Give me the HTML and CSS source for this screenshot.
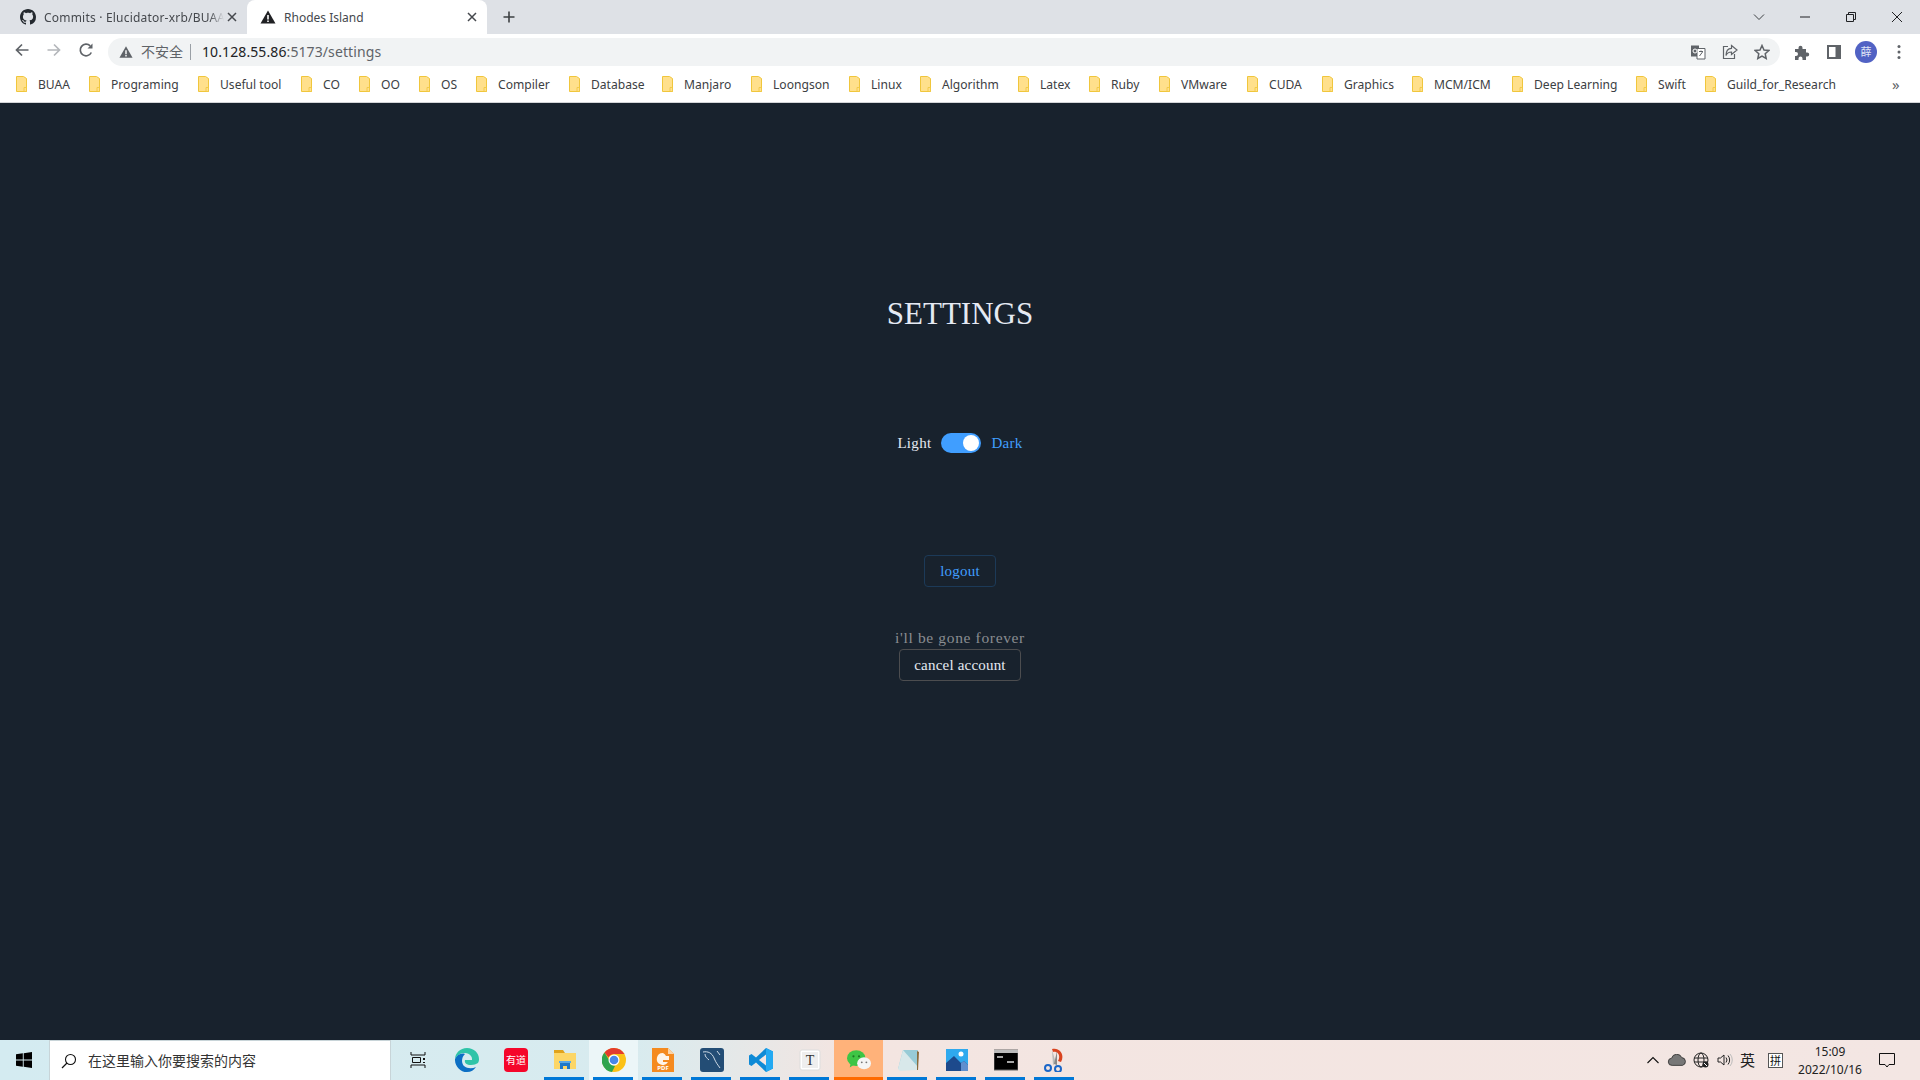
FILE: index.html
```html
<!DOCTYPE html>
<html lang="en">

<head>
    <meta charset="UTF-8">
    <meta name="viewport" content="width=device-width, initial-scale=1.0">
    <title>Rhodes Island</title>
    <link rel="stylesheet" href="styles.css">
</head>

<body>
    <svg class="sprites" width="0" height="0">
        <symbol id="folder" viewBox="0 0 11 16">
            <path d="M.5.5h7l3 2v13H.5z" fill="#ffe08c" stroke="#f0c63c"/>
            <path d="M8 11.5h2.5v4H8z" fill="#ffe08c" stroke="#f0c63c" stroke-width=".8"/>
        </symbol>
        <symbol id="warn" viewBox="0 0 16 16">
            <path d="M8 1.5 15.5 14.5H.5z" fill="currentColor"/>
            <path d="M7.2 6h1.6v4.6H7.2zM7.2 11.4h1.6V13H7.2z" fill="#fff"/>
        </symbol>
        <symbol id="close-x" viewBox="0 0 10 10">
            <path d="M1 1l8 8M9 1 1 9" stroke="#45484d" stroke-width="1.500"/>
        </symbol>
    </svg>

    <div class="browser">
        <div class="tabstrip">
            <div class="tab">
                <svg class="favicon" viewBox="0 0 16 16"><path fill="#24292f" d="M8 0C3.58 0 0 3.58 0 8c0 3.54 2.29 6.53 5.47 7.59.4.07.55-.17.55-.38 0-.19-.01-.82-.01-1.49-2.01.37-2.53-.49-2.69-.94-.09-.23-.48-.94-.82-1.13-.28-.15-.68-.52-.01-.53.63-.01 1.08.58 1.23.82.72 1.21 1.87.87 2.33.66.07-.52.28-.87.51-1.07-1.78-.2-3.64-.89-3.64-3.95 0-.87.31-1.59.82-2.15-.08-.2-.36-1.02.08-2.12 0 0 .67-.21 2.2.82.64-.18 1.32-.27 2-.27s1.36.09 2 .27c1.53-1.04 2.2-.82 2.2-.82.44 1.1.16 1.92.08 2.12.51.56.82 1.27.82 2.15 0 3.07-1.87 3.75-3.65 3.95.29.25.54.73.54 1.48 0 1.07-.01 1.93-.01 2.2 0 .21.15.46.55.38A8.01 8.01 0 0 0 16 8c0-4.42-3.58-8-8-8z"/></svg>
                <span class="tab-title tab-title-fade">Commits · Elucidator-xrb/BUAA</span>
                <svg class="tab-close"><use href="#close-x"/></svg>
            </div>
            <div class="tab tab-active">
                <svg class="favicon favicon-warn"><use href="#warn"/></svg>
                <span class="tab-title">Rhodes Island</span>
                <svg class="tab-close"><use href="#close-x"/></svg>
            </div>
            <svg class="new-tab" viewBox="0 0 12 12"><path d="M6 .5v11M.5 6h11" stroke="#3c4043" stroke-width="1.6"/></svg>
            <div class="window-buttons">
                <svg viewBox="0 0 12 12" class="win-chevron"><path d="M1 3.5 6 8.5 11 3.5" fill="none" stroke="#3c4043"/></svg>
                <svg viewBox="0 0 12 12" class="win-min"><path d="M1 6h10" stroke="#202124"/></svg>
                <svg viewBox="0 0 12 12" class="win-restore"><path d="M1.5 3.5h7v7h-7zM3.5 3.5v-2h7v7h-2" fill="none" stroke="#202124"/></svg>
                <svg viewBox="0 0 12 12" class="win-close"><path d="M1 1l10 10M11 1 1 11" stroke="#202124"/></svg>
            </div>
        </div>

        <div class="toolbar">
            <div class="nav-buttons">
                <svg viewBox="0 0 16 16"><path d="M14.5 8H2.5M8 2.5 2.5 8 8 13.5" fill="none" stroke="#5f6368" stroke-width="1.7"/></svg>
                <svg viewBox="0 0 16 16"><path d="M1.5 8h12M8 2.5 13.500 8 8 13.5" fill="none" stroke="#b4b7bb" stroke-width="1.7"/></svg>
                <svg viewBox="0 0 16 16"><path d="M13.300 10.500A5.800 5.800 0 1 1 12.200 3.900" fill="none" stroke="#5f6368" stroke-width="1.7"/><path d="M14.500 1.500v5h-5z" fill="#5f6368"/></svg>
            </div>
            <div class="omnibox">
                <svg class="omni-warn"><use href="#warn"/></svg>
                <span class="not-secure">不安全</span>
                <span class="omni-sep"></span>
                <span class="url"><span class="url-host">10.128.55.86</span>:5173/settings</span>
                <div class="omni-actions">
                    <svg viewBox="0 0 16 16"><path d="M1 1.500h8v11H1z" fill="#5f6368"/><path d="M7 4.500h8v10.500H7z" fill="#fff" stroke="#5f6368"/><path d="M9 7.500h4M11 6.500v1M9.500 12l3-4" stroke="#5f6368" fill="none"/><circle cx="5" cy="7" r="2" fill="none" stroke="#fff"/></svg>
                    <svg viewBox="0 0 16 16"><path d="M6 2.500H1.500v12h11V10" fill="none" stroke="#5f6368" stroke-width="1.200"/><path d="M9.500 1.500 15 6l-5.500 4.500V8C7 8 5 9 4 11.500 4 7.500 6 4.500 9.500 4.300z" fill="none" stroke="#5f6368" stroke-width="1.200"/></svg>
                    <svg viewBox="0 0 16 16"><path d="M8 1.500l2 4.500 4.800.5-3.600 3.200 1 4.800L8 12.100 3.800 14.500l1-4.800L1.200 6.500 6 6z" fill="none" stroke="#5f6368" stroke-width="1.500"/></svg>
                </div>
            </div>
            <div class="tool-buttons">
                <svg class="tool-ext" viewBox="0 0 16 16"><path d="M1 5h3.500V3.800a2 2 0 0 1 4 0V5H12v3.500h1.200a2 2 0 0 1 0 4H12V16H8.500v-1.500a2 2 0 0 0-4 0V16H1v-4h1a2 2 0 0 0 0-4H1z" fill="#5f6368"/></svg>
                <svg class="tool-side" viewBox="0 0 14 14"><path d="M1 1h12v12H1z" fill="none" stroke="#5f6368" stroke-width="2"/><path d="M8.500 1H13v12H8.500z" fill="#5f6368"/></svg>
                <span class="avatar">薛</span>
                <svg class="tool-dots" viewBox="0 0 4 16"><circle cx="2" cy="2.500" r="1.500" fill="#5f6368"/><circle cx="2" cy="8" r="1.500" fill="#5f6368"/><circle cx="2" cy="13.500" r="1.500" fill="#5f6368"/></svg>
            </div>
        </div>

        <div class="bookmarks">
            <div class="bookmark"><svg><use href="#folder"/></svg>BUAA</div>
            <div class="bookmark"><svg><use href="#folder"/></svg>Programing</div>
            <div class="bookmark"><svg><use href="#folder"/></svg>Useful tool</div>
            <div class="bookmark"><svg><use href="#folder"/></svg>CO</div>
            <div class="bookmark"><svg><use href="#folder"/></svg>OO</div>
            <div class="bookmark"><svg><use href="#folder"/></svg>OS</div>
            <div class="bookmark"><svg><use href="#folder"/></svg>Compiler</div>
            <div class="bookmark"><svg><use href="#folder"/></svg>Database</div>
            <div class="bookmark"><svg><use href="#folder"/></svg>Manjaro</div>
            <div class="bookmark"><svg><use href="#folder"/></svg>Loongson</div>
            <div class="bookmark"><svg><use href="#folder"/></svg>Linux</div>
            <div class="bookmark"><svg><use href="#folder"/></svg>Algorithm</div>
            <div class="bookmark"><svg><use href="#folder"/></svg>Latex</div>
            <div class="bookmark"><svg><use href="#folder"/></svg>Ruby</div>
            <div class="bookmark"><svg><use href="#folder"/></svg>VMware</div>
            <div class="bookmark"><svg><use href="#folder"/></svg>CUDA</div>
            <div class="bookmark"><svg><use href="#folder"/></svg>Graphics</div>
            <div class="bookmark"><svg><use href="#folder"/></svg>MCM/ICM</div>
            <div class="bookmark"><svg><use href="#folder"/></svg>Deep Learning</div>
            <div class="bookmark"><svg><use href="#folder"/></svg>Swift</div>
            <div class="bookmark"><svg><use href="#folder"/></svg>Guild_for_Research</div>
            <div class="bookmark-more">»</div>
        </div>
    </div>

    <main class="settings">
        <h1>SETTINGS</h1>
        <div class="theme-row">
            <span class="theme-label">Light</span>
            <span class="switch"><span class="switch-knob"></span></span>
            <span class="theme-label theme-on">Dark</span>
        </div>
        <button class="btn btn-logout">logout</button>
        <p class="gone-text">i'll be gone forever</p>
        <button class="btn btn-cancel">cancel account</button>
    </main>

    <footer class="taskbar">
        <svg class="start" viewBox="0 0 16 16"><path d="M0 2.300 6.800 1.300V7.500H0zM7.700 1.200 16 0V7.500H7.700zM0 8.400H6.800V14.700L0 13.700zM7.700 8.400H16V16L7.700 14.800z" fill="#000"/></svg>
        <div class="search">
            <svg viewBox="0 0 16 16"><circle cx="9.500" cy="6.500" r="5" fill="none" stroke="#111" stroke-width="1.100"/><path d="M6 10 1 15" stroke="#111" stroke-width="1.200"/></svg>
            <span class="search-text">在这里输入你要搜索的内容</span>
        </div>
        <div class="task-icons">
            <div class="task"><svg viewBox="0 0 16 16"><path d="M1 0v3h14V0M1 16v-3h14v3M2.500 5.500h8v5h-8z" fill="none" stroke="#111"/><path d="M13 6h2v2h-2zM13 10h2v1h-2z" fill="#111"/></svg></div>
            <div class="task"><svg viewBox="0 0 24 24"><path d="M12 0C5 0 .3 5 0 11c2-4 6-6.500 10-6 5 .5 7.500 3.500 7 7h-7c-1 3 2 5 6 5 3 0 5-1 7-2 1-2 1-3 1-4C24 5 19 0 12 0z" fill="#2fc4a8"/><path d="M0 11c-.3 7 5 13 12 13 4 0 7-2 9-5-4 2-9 1.500-12-1-3-3-2.500-9 1-12C6 4.500 2 7 0 11z" fill="#0c6fc4"/></svg></div>
            <div class="task"><svg viewBox="0 0 24 24"><rect width="24" height="24" rx="4" fill="#f5062a"/><text x="12" y="16" text-anchor="middle" class="youdao">有道</text></svg></div>
            <div class="task task-on"><svg viewBox="0 0 24 24"><path d="M1 2h9l2 3H1z" fill="#e0a31c"/><path d="M1 5h22v16H1z" fill="#fcd667"/><path d="M7 21v-6h10v6h-3v-3h-4v3z" fill="#1e78c8"/><path d="M6 13h12v2H6z" fill="#5aa9e6"/></svg></div>
            <div class="task task-on task-chrome"><svg viewBox="0 0 24 24"><circle cx="12" cy="12" r="12" fill="#fbc116"/><path d="M12 0a12 12 0 0 1 10.400 6H12a6 6 0 0 0-5.500 3.600L2.500 4.500A12 12 0 0 1 12 0z" fill="#e33b2e"/><path d="M2.500 4.500 8 13.500a6 6 0 0 0 5 4.500l-3 6A12 12 0 0 1 2.500 4.500z" fill="#2fa44f"/><circle cx="12" cy="12" r="5.500" fill="#fff"/><circle cx="12" cy="12" r="4.300" fill="#4a86e8"/></svg></div>
            <div class="task task-on"><svg viewBox="0 0 24 24"><path d="M1 0h16l6 6v18H1z" fill="#f58a1f"/><path d="M17 0l6 6h-6z" fill="#fcd3a6"/><path d="M12 5a6 6 0 1 0 5 9h-5v-2h6V8h-3a6 6 0 0 0-3-3z" fill="#fff" opacity=".9"/><text x="12" y="22" text-anchor="middle" class="pdf">PDF</text></svg></div>
            <div class="task task-on"><svg viewBox="0 0 24 24"><rect width="24" height="24" rx="3" fill="#234d75"/><path d="M3 4c5-1 9 1 11 6s4 7 6 10M5 6c0 3 2 4 4 6M17 3l3 4" fill="none" stroke="#cfdbe6" stroke-width="1"/></svg></div>
            <div class="task task-on"><svg viewBox="0 0 24 24"><path d="M17 0 24 3.500V20.500L17 24 7 14.500 2.500 18 0 16.500V7.500L2.500 6 7 9.500z" fill="#0e8ad6"/><path d="M17 0 24 3.500V20.500L17 24z" fill="#23a9f2"/><path d="M17 6.500 10 12l7 5.500z" fill="#f3e6e3"/></svg></div>
            <div class="task task-on"><svg viewBox="0 0 24 24"><rect x="2" y="2" width="20" height="20" rx="2" fill="#fff" stroke="#ddd"/><rect x="4" y="4" width="16" height="16" fill="#eee"/><text x="12" y="17" text-anchor="middle" class="typora">T</text></svg></div>
            <div class="task task-on task-wechat"><svg viewBox="0 0 26 24"><ellipse cx="10" cy="10" rx="10" ry="8.500" fill="#3ec545"/><path d="M4 15l-1 5 5-3z" fill="#3ec545"/><ellipse cx="18.500" cy="15.500" rx="7.500" ry="6.500" fill="#f5f5f5"/><circle cx="7" cy="8" r="1.200" fill="#1d7a22"/><circle cx="13" cy="8" r="1.200" fill="#1d7a22"/><circle cx="16" cy="14.500" r="1" fill="#777"/><circle cx="21" cy="14.500" r="1" fill="#777"/></svg></div>
            <div class="task task-on"><svg viewBox="0 0 24 24"><path d="M7 2h15l-1 18-19 1z" fill="#98cbd6"/><path d="M7 2 2 21l2 2 17-1 1-3z" fill="#d8e8ea"/><path d="M21 3l2 1-1 18-1 0z" fill="#8a6b3c"/></svg></div>
            <div class="task task-on"><svg viewBox="0 0 24 24"><path d="M1 1h22v22H1z" fill="#2fa9ee"/><path d="M1 23V15l8-7 7 7 3-2 4 4v6z" fill="#1d4a8c"/><path d="M16 15l3-2 4 4v6h-7z" fill="#5f8fcf"/><circle cx="16" cy="6" r="2.500" fill="#fff"/></svg></div>
            <div class="task task-on"><svg viewBox="0 0 24 24"><path d="M0 2h24v20H0z" fill="#000" stroke="#666"/><path d="M0 2h24v3H0z" fill="#bbb"/><path d="M3 9h6M13 14h7" stroke="#ddd" stroke-width="1.500"/></svg></div>
            <div class="task task-on"><svg viewBox="0 0 24 24"><path d="M9 1c8-2 13 6 9 13l-3-1c3-5 0-10-5-9z" fill="#d9431f"/><path d="M9 2 13 15 10 17z" fill="#bbb"/><path d="M14 3 11 16l3 1z" fill="#888"/><circle cx="5" cy="20" r="3" fill="none" stroke="#1a66c8" stroke-width="2"/><circle cx="15" cy="21" r="3" fill="none" stroke="#1a66c8" stroke-width="2"/></svg></div>
        </div>
        <div class="tray">
            <svg class="tray-chevron" viewBox="0 0 12 8"><path d="M.5 7 6 1.500 11.500 7" fill="none" stroke="#111" stroke-width="1.100"/></svg>
            <svg class="tray-cloud" viewBox="0 0 16 10"><path d="M4 9.500a3 3 0 0 1-.5-6A4.500 4.500 0 0 1 12 3a3.300 3.300 0 0 1 .5 6.500z" fill="#777" stroke="#222" stroke-width=".6"/></svg>
            <svg class="tray-globe" viewBox="0 0 16 16"><circle cx="8" cy="8" r="7" fill="none" stroke="#222"/><ellipse cx="8" cy="8" rx="3" ry="7" fill="none" stroke="#222"/><path d="M1 6h14M1 10h14" stroke="#222"/><circle cx="12.500" cy="12.500" r="3" fill="#222"/><path d="M11 11l3 3" stroke="#fff"/></svg>
            <svg class="tray-sound" viewBox="0 0 16 16"><path d="M1 6h2.500L7 3v10L3.500 10H1z" fill="none" stroke="#222"/><path d="M9 5.500a4 4 0 0 1 0 5M11 3.500a7 7 0 0 1 0 9" fill="none" stroke="#222"/><path d="M13 2a9 9 0 0 1 0 12" fill="none" stroke="#bbb"/></svg>
            <span class="tray-lang">英</span>
            <span class="tray-ime">拼</span>
            <div class="clock"><span>15:09</span><span>2022/10/16</span></div>
            <svg class="tray-notify" viewBox="0 0 16 16"><path d="M.5 1.500h15v11H10L8 15l-2-2.500H.5z" fill="none" stroke="#111"/></svg>
        </div>
    </footer>
</body>

</html>
```

FILE: styles.css
```css
* {
    box-sizing: border-box;
}

html,
body {
    height: 100%;
}

body {
    margin: 0;
    display: flex;
    flex-direction: column;
    height: 1080px;
    overflow: hidden;
    background-color: #18222d;
    font-family: "Noto Sans", "Noto Sans CJK SC", sans-serif;
}

.sprites {
    position: absolute;
}

/* browser chrome */
.browser {
    flex: none;
    height: 103px;
    background-color: #fff;
    border-bottom: 1px solid #d3d5d8;
}

.tabstrip {
    height: 34px;
    display: flex;
    align-items: center;
    background-color: #dee1e6;
}

.tab {
    width: 240px;
    height: 34px;
    display: flex;
    align-items: center;
    padding-left: 20px;
    margin-right: 7px;
    font-size: 12px;
    color: #45484d;
}

.tab-active {
    margin-right: 0;
    padding-left: 13px;
    background-color: #fff;
    border-radius: 8px 8px 0 0;
}

.favicon {
    width: 16px;
    height: 16px;
    flex: none;
}

.favicon-warn {
    color: #202124;
}

.tab-title {
    width: 183px;
    margin-left: 8px;
    white-space: nowrap;
    overflow: hidden;
    flex: none;
}

.tab-title-fade {
    width: 180px;
    margin-right: 3px;
    letter-spacing: 0.2px;
    -webkit-mask-image: linear-gradient(90deg, #000 92%, transparent);
    mask-image: linear-gradient(90deg, #000 92%, transparent);
}

.tab-close {
    width: 10px;
    height: 10px;
    flex: none;
}

.new-tab {
    width: 12px;
    height: 12px;
    margin-left: 16px;
}

.window-buttons {
    margin-left: auto;
    display: flex;
    align-items: center;
    padding-right: 17px;
}

.window-buttons svg {
    width: 12px;
    height: 12px;
}

.win-min,
.win-restore,
.win-close {
    margin-left: 34px;
}

.toolbar {
    height: 32px;
    display: flex;
    align-items: center;
}

.nav-buttons {
    width: 108px;
    display: flex;
    padding-left: 14px;
    gap: 16px;
}

.nav-buttons svg {
    width: 16px;
    height: 16px;
}

.omnibox {
    width: 1672px;
    height: 28px;
    margin-top: 4px;
    display: flex;
    align-items: center;
    padding-left: 11px;
    background-color: #f1f3f4;
    border-radius: 14px;
    font-size: 14px;
    color: #5f6368;
}

.omni-warn {
    width: 14px;
    height: 14px;
    color: #5f6368;
}

.not-secure {
    margin-left: 8px;
    font-size: 14px;
    line-height: 24px;
    padding-bottom: 1px;
    color: #5f6368;
}

.omni-sep {
    width: 1px;
    height: 16px;
    margin: 0 11px 0 7px;
    background-color: #9aa0a6;
}

.url {
    line-height: 24px;
    letter-spacing: 0.1px;
}

.url-host {
    color: #202124;
}

.omni-actions {
    margin-left: auto;
    display: flex;
    gap: 16px;
    padding-right: 10px;
}

.omni-actions svg {
    width: 16px;
    height: 16px;
}

.tool-buttons {
    flex: 1;
    margin-top: 4px;
    display: flex;
    align-items: center;
    padding-left: 14px;
}

.tool-ext {
    width: 16px;
    height: 16px;
}

.tool-side {
    width: 14px;
    height: 14px;
    margin-left: 17px;
}

.avatar {
    width: 22px;
    height: 22px;
    margin-left: 14px;
    border-radius: 50%;
    background-color: #5162c4;
    color: #dfe3f5;
    font-size: 11px;
    text-align: center;
    line-height: 22px;
}

.tool-dots {
    width: 4px;
    height: 16px;
    margin-left: 20px;
}

.bookmarks {
    height: 36px;
    display: grid;
    grid-template-columns: 73px 109px 103px 58px 60px 57px 93px 93px 89px 98px 71px 98px 71px 70px 88px 75px 90px 100px 124px 69px 187px auto;
    align-items: center;
    padding-left: 16px;
    font-size: 12.100px;
    color: #3c4043;
}

.bookmark {
    display: flex;
    align-items: center;
    white-space: nowrap;
}

.bookmark svg {
    width: 11px;
    height: 16px;
    margin-right: 11px;
    flex: none;
}

.bookmark-more {
    font-size: 15px;
    color: #5f6368;
}

/* page */
.settings {
    flex: 1;
    display: flex;
    flex-direction: column;
    align-items: center;
    padding-top: 191px;
    font-family: "Liberation Serif", serif;
    color: #e5eaf3;
}

h1 {
    margin: 0;
    font-size: 31px;
    font-weight: normal;
    line-height: 40px;
}

.theme-row {
    display: flex;
    align-items: center;
    height: 20px;
    margin-top: 99px;
    font-size: 15px;
    letter-spacing: 0.3px;
}

.theme-on {
    color: #409eff;
}

.switch {
    width: 40px;
    height: 20px;
    margin: 0 10px;
    padding: 2px;
    display: flex;
    justify-content: flex-end;
    border-radius: 10px;
    background-color: #409eff;
}

.switch-knob {
    width: 16px;
    height: 16px;
    border-radius: 50%;
    background-color: #fff;
}

.btn {
    height: 32px;
    padding: 0;
    background-color: transparent;
    border-radius: 4px;
    font-family: inherit;
    font-size: 15px;
    letter-spacing: 0.2px;
    white-space: nowrap;
}

.btn-logout {
    width: 72px;
    margin-top: 102px;
    color: #409eff;
    border: 1px solid #1c3a58;
}

.gone-text {
    height: 20px;
    margin: 41px 0 1px;
    font-size: 15.500px;
    line-height: 20px;
    letter-spacing: 0.65px;
    color: #8a8d91;
}

.btn-cancel {
    width: 122px;
    color: #e5eaf3;
    border: 1px solid #4c4d4f;
}

/* windows taskbar */
.taskbar {
    flex: none;
    height: 40px;
    display: flex;
    align-items: center;
    background: linear-gradient(90deg, #d4ebf1 0%, #d8ebef 33%, #f3e5e1 44%, #f3e6e3 100%);
    font-size: 12px;
    color: #111;
}

.start {
    width: 16px;
    height: 16px;
    margin: 0 17px 0 16px;
    flex: none;
}

.search {
    width: 342px;
    height: 40px;
    display: flex;
    align-items: center;
    padding-left: 11px;
    background-color: #fff;
    border: 1px solid #c8d4d8;
    border-width: 1px 1px 0;
    font-size: 14px;
    color: #333;
}

.search svg {
    width: 16px;
    height: 16px;
    margin-right: 11px;
}

.search-text {
    padding-bottom: 2px;
}

.task-icons {
    display: flex;
    margin-left: 2px;
}

.task {
    width: 49px;
    height: 40px;
    display: flex;
    align-items: center;
    justify-content: center;
    position: relative;
}

.task svg {
    width: 24px;
    height: 24px;
}

.task:first-child svg {
    width: 16px;
    height: 16px;
}

.task-on::after {
    content: "";
    position: absolute;
    left: 4px;
    right: 5px;
    bottom: 0;
    height: 3px;
    background-color: #0078d7;
}

.task-chrome {
    background-color: #ecf6f8;
}

.task-wechat {
    background-color: #ffb27a;
}

.task-wechat::after {
    left: 0;
    right: 0;
    background-color: #ff6a00;
}

.youdao {
    font-family: "Noto Sans CJK SC", sans-serif;
    font-size: 10px;
    fill: #fff;
}

.pdf {
    font-family: "Noto Sans", sans-serif;
    font-size: 6px;
    font-weight: bold;
    fill: #fff;
}

.typora {
    font-family: "Liberation Serif", serif;
    font-size: 14px;
    fill: #333;
}

.tray {
    margin-left: auto;
    display: flex;
    align-items: center;
    height: 40px;
    padding-right: 5px;
}

.tray-chevron {
    width: 12px;
    height: 8px;
}

.tray-cloud {
    width: 20px;
    height: 12px;
    margin-left: 8px;
}

.tray-globe {
    width: 16px;
    height: 16px;
    margin-left: 6px;
}

.tray-sound {
    width: 16px;
    height: 16px;
    margin-left: 8px;
}

.tray-lang {
    margin-left: 7px;
    padding-bottom: 2px;
    font-size: 15px;
    color: #222;
}

.tray-ime {
    width: 15px;
    height: 15px;
    margin-left: 13px;
    border: 1px solid #555;
    font-size: 11px;
    line-height: 13px;
    text-align: center;
    background-color: #fff;
}

.clock {
    width: 84px;
    margin-left: 5px;
    display: flex;
    flex-direction: column;
    align-items: center;
    gap: 1px;
    font-size: 12px;
    line-height: 17px;
    color: #222;
}

.tray-notify {
    width: 16px;
    height: 16px;
    margin-left: 7px;
    margin-right: 20px;
}
```
